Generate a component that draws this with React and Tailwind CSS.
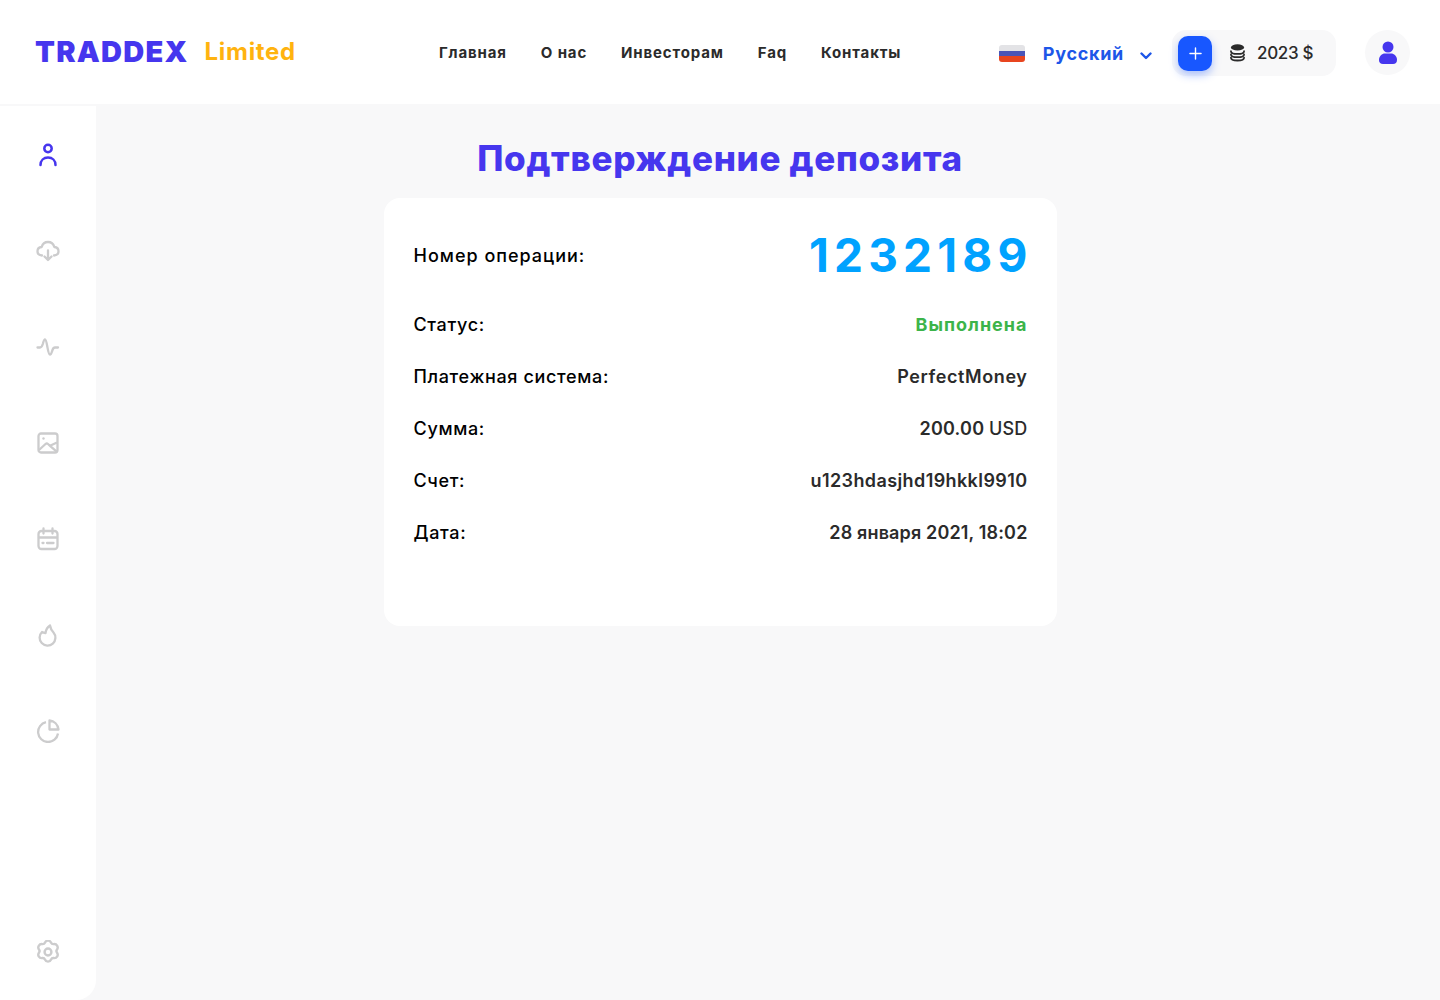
import React from 'react';

const font = { fontFamily: 'Inter, "Noto Sans", sans-serif' };

const iconClass = 'w-6 h-6';

const UserIcon = ({ className }) => (
  <svg viewBox="0 0 24 24" fill="none" stroke="currentColor" strokeWidth="2.500" strokeLinecap="round" className={className}>
    <circle cx="12" cy="5.500" r="3.700" />
    <path d="M4.500 22c0-4.600 3.200-7.500 7.500-7.500s7.500 2.900 7.500 7.500" />
  </svg>
);

const CloudIcon = ({ className }) => (
  <svg viewBox="0 0 24 24" fill="none" stroke="currentColor" strokeWidth="2.300" strokeLinecap="round" strokeLinejoin="round" className={className}>
    <path d="M6 16.500c-2.600-.2-4.500-2-4.500-4.300 0-2.300 1.800-4 4.200-4.200C6.500 5.100 9 3 12 3s5.500 2.100 6.300 5c2.400.2 4.200 1.900 4.200 4.200 0 2.300-1.900 4.100-4.500 4.300" />
    <path d="M12 11.500v9.500M8.500 17.500l3.500 3.500 3.500-3.500" />
  </svg>
);

const PulseIcon = ({ className }) => (
  <svg viewBox="0 0 24 24" fill="none" stroke="currentColor" strokeWidth="2.300" strokeLinecap="round" strokeLinejoin="round" className={className}>
    <path d="M1.500 12.500H4c1.500 0 2-1 2.800-3.500C7.500 6.500 8 4.500 9 4.500s1.500 2.500 2.300 7c.8 4.500 1.400 8 2.700 8s1.800-2.500 2.500-4.500c.6-1.800 1.200-2.500 2.500-2.500h3" />
  </svg>
);

const ImageIcon = ({ className }) => (
  <svg viewBox="0 0 24 24" fill="none" stroke="currentColor" strokeWidth="2.300" strokeLinejoin="round" className={className}>
    <rect x="2.500" y="2.500" width="19" height="19" rx="2.500" />
    <circle cx="7.500" cy="7.500" r="1.200" fill="currentColor" stroke="none" />
    <path d="M3 19l6.500-6c.8-.7 1.700-.7 2.500 0l2 1.800 7-3.300M14 14.800l7 6" />
  </svg>
);

const CalendarIcon = ({ className }) => (
  <svg viewBox="0 0 24 24" fill="none" stroke="currentColor" strokeWidth="2.300" strokeLinecap="round" className={className}>
    <rect x="2.500" y="4" width="19" height="18" rx="3" />
    <path d="M7.500 1.500v5M16.500 1.500v5M3 10.500h18M6.500 16h1M11 16h6.500" />
  </svg>
);

const FlameIcon = ({ className }) => (
  <svg viewBox="0 0 24 24" fill="none" stroke="currentColor" strokeWidth="2.300" strokeLinejoin="round" className={className}>
    <path d="M6 9A7.900 7.900 0 1 0 17.500 9.500C15.500 7.500 14.500 5.500 14 2.500 11.500 4 10 6.500 9.500 10 8.200 9.800 7 9.500 6 9z" />
  </svg>
);

const PieIcon = ({ className }) => (
  <svg viewBox="0 0 24 24" fill="none" stroke="currentColor" strokeWidth="2.300" strokeLinejoin="round" className={className}>
    <path d="M10 3.200A10 10 0 1 0 22 14.500" />
    <path d="M13.500 1.500c4.700.4 8.400 4 9 9h-9z" />
  </svg>
);

const GearIcon = ({ className }) => (
  <svg viewBox="1.500 1.500 21 21" fill="none" stroke="currentColor" strokeWidth="2.100" strokeLinejoin="round" className={className}>
    <path d="M12 2c1.300 0 2.200.8 2.700 1.900.4.900 1.200 1.300 2.200 1.200 1.400-.2 2.500.3 3.200 1.500.7 1.200.5 2.300-.3 3.400-.6.800-.6 1.600 0 2.400.8 1.100 1 2.200.3 3.400-.7 1.200-1.800 1.700-3.200 1.500-1-.1-1.800.3-2.200 1.200-.5 1.100-1.400 1.900-2.700 1.900s-2.200-.8-2.700-1.900c-.4-.9-1.200-1.300-2.200-1.200-1.400.2-2.500-.3-3.200-1.500-.7-1.200-.5-2.300.3-3.400.6-.8.6-1.600 0-2.400-.8-1.100-1-2.200-.3-3.400.7-1.200 1.800-1.700 3.200-1.500 1 .1 1.800-.3 2.200-1.200C9.800 2.800 10.700 2 12 2z" />
    <circle cx="12" cy="12" r="3" />
  </svg>
);

const CoinsIcon = () => (
  <svg viewBox="0 0 16 19" fill="none" className="block w-[15px] h-[18px]">
    <ellipse cx="8" cy="3.500" rx="7" ry="3.300" fill="#2b2b2b" />
    <path d="M1 7.500c0 1.700 3.100 3 7 3s7-1.300 7-3M1 11c0 1.700 3.100 3 7 3s7-1.300 7-3M1 14.500c0 1.700 3.100 3 7 3s7-1.300 7-3" stroke="#2b2b2b" strokeWidth="1.900" strokeLinecap="round" />
  </svg>
);

const navLinks = ['Главная', 'О нас', 'Инвесторам', 'Faq', 'Контакты'];

const sideIcons = [
  { Icon: UserIcon, active: true },
  { Icon: CloudIcon },
  { Icon: PulseIcon },
  { Icon: ImageIcon },
  { Icon: CalendarIcon },
  { Icon: FlameIcon },
  { Icon: PieIcon },
];

const rows = [
  { label: 'Статус:', value: 'Выполнена', className: 'text-[#3cb44a] font-bold tracking-[1px]' },
  { label: 'Платежная система:', value: 'PerfectMoney', className: 'font-semibold text-[#2b2b2b] tracking-[0.6px]' },
  { label: 'Сумма:', value: <>200.00 <span className="font-medium">USD</span></>, className: 'font-semibold text-[#2b2b2b] tracking-[0.2px]' },
  { label: 'Счет:', value: 'u123hdasjhd19hkkl9910', className: 'font-semibold text-[#2b2b2b] tracking-[0.4px]' },
  { label: 'Дата:', value: '28 января 2021, 18:02', className: 'font-semibold text-[#2b2b2b] tracking-[0.15px]' },
];

export default function App() {
  return (
    <div style={font} className="w-[1440px] h-[1000px] overflow-hidden flex flex-col bg-[#f8f8f9]">
      <header className="h-[104px] shrink-0 bg-white flex items-center pl-[35px] pr-[30px]">
        <div className="w-[404px] -mt-px flex items-center gap-[16px]">
          <span className="text-[29px] leading-none font-black tracking-[1.25px] text-[#4636ee]">TRADDEX</span>
          <span className="text-[24px] leading-none font-bold tracking-[0.7px] text-[#ffb30f]">Limited</span>
        </div>
        <nav className="flex gap-[34px] mt-[2px] text-[15px] font-bold tracking-[0.85px] text-[#2b2b2b]">
          {navLinks.map((link) => (
            <a key={link} href="#">{link}</a>
          ))}
        </nav>
        <div className="ml-auto flex items-center mt-[2px]">
          <div className="w-[26px] h-[17px] rounded-[3px] overflow-hidden flex flex-col">
            <span className="h-[6px] bg-[#e3e3e6]" />
            <span className="h-[5px] bg-[#4a55b8]" />
            <span className="h-[6px] bg-[#e8451f]" />
          </div>
          <span className="ml-[18px] mt-px text-[18px] font-bold tracking-[0.7px] text-[#1d56e8]">Русский</span>
          <svg viewBox="0 0 12 8" fill="none" stroke="#1d56e8" strokeWidth="2.400" strokeLinecap="round" strokeLinejoin="round" className="ml-[16px] mt-[6px] w-3 h-2">
            <path d="M1.500 1.500L6 6l4.500-4.500" />
          </svg>
          <div className="ml-[20px] w-[164px] h-[46px] rounded-[14px] bg-[#f8f8f9] flex items-center pl-[6px]">
            <button className="w-[34px] h-[35px] rounded-[10px] bg-[#1857ff] text-white flex items-center justify-center shadow-[0_4px_8px_rgba(24,87,255,0.35)]">
              <svg viewBox="0 0 14 14" stroke="currentColor" strokeWidth="1.500" strokeLinecap="round" className="w-[13px] h-[13px]">
                <path d="M7 1v12M1 7h12" />
              </svg>
            </button>
            <span className="ml-[18px]"><CoinsIcon /></span>
            <span className="ml-[12px] mt-[2px] text-[17px] font-medium tracking-[-0.3px] text-[#2b2b2b]">2023 $</span>
          </div>
          <div className="ml-[29px] -mt-[2px] w-[45px] h-[45px] rounded-full bg-[#f8f8f9] flex items-center justify-center">
            <svg viewBox="0 0 18 23" fill="#4636ee" className="w-[18px] h-[23px]">
              <circle cx="9" cy="6" r="5.500" />
              <path d="M0 19c0-4 3-6.500 6-6.500h6c3 0 6 2.500 6 6.500 0 2.500-1.500 4-4 4H4c-2.500 0-4-1.500-4-4z" />
            </svg>
          </div>
        </div>
      </header>

      <div className="flex flex-1 pt-[2px] min-h-0">
        <aside className="w-[96px] shrink-0 bg-white rounded-br-[20px] flex flex-col items-center pt-[37px] pb-[36px]">
          {sideIcons.map(({ Icon, active }, i) => (
            <div key={i} className="h-[96px] shrink-0 flex items-start">
              <Icon className={`${iconClass} ${active ? 'text-[#4636ee]' : 'text-[#cccccd]'}`} />
            </div>
          ))}
          <GearIcon className={`${iconClass} mt-auto text-[#cccccd]`} />
        </aside>

        <main className="flex-1 flex flex-col items-center pr-[96px]">
          <h1 className="mt-[30px] text-[35px] leading-[44px] font-extrabold tracking-[0.7px] text-[#4636ee]">Подтверждение депозита</h1>
          <div className="mt-[18px] w-[673px] h-[428px] bg-white rounded-[16px] pl-[30px] pr-[29px] pt-[30px]">
            <div className="h-[54px] flex items-center justify-between">
              <span className="text-[18px] font-medium tracking-[1px] text-black">Номер операции:</span>
              <span className="text-[46px] font-bold tracking-[5.200px] text-[#00a2ff] -mr-[5px]">1232189</span>
            </div>
            <div className="mt-[16px]">
              {rows.map((row) => (
                <div key={row.label} className="h-[52px] flex items-center justify-between text-[18px]">
                  <span className="font-medium tracking-[0.65px] text-black">{row.label}</span>
                  <span className={row.className}>{row.value}</span>
                </div>
              ))}
            </div>
          </div>
        </main>
      </div>
    </div>
  );
}
